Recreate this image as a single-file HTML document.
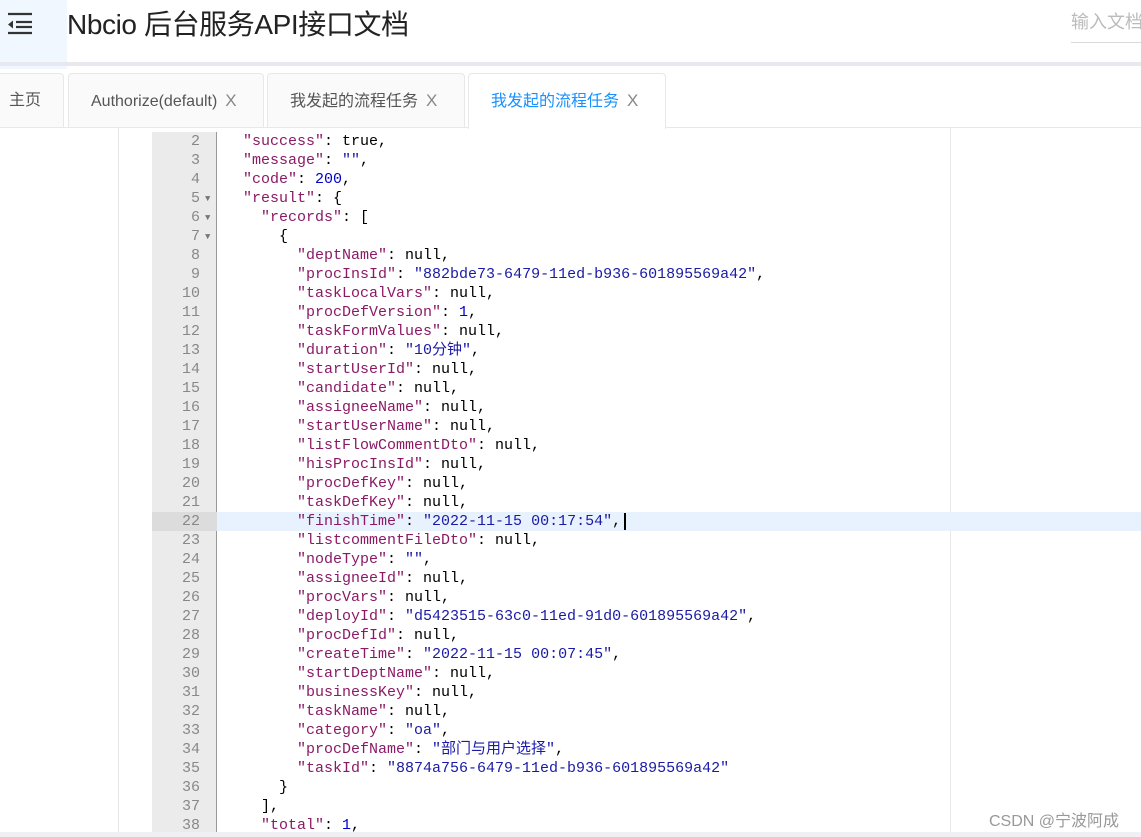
<!DOCTYPE html>
<html><head><meta charset="utf-8"><style>
*{margin:0;padding:0;box-sizing:border-box}
body{width:1141px;height:837px;overflow:hidden;background:#fff;font-family:"Liberation Sans","Noto Sans CJK SC",sans-serif;position:relative}
.hdr{position:absolute;left:0;top:0;width:1141px;height:62px;background:#fff}
.menu{position:absolute;left:0;top:0;width:67px;height:69px;background:#f0f7ff}
.title{position:absolute;left:67px;top:3px;font-size:28px;color:#222;letter-spacing:-0.4px}
.search{position:absolute;left:1071px;top:8px;font-size:18px;color:#bbb;white-space:nowrap}
.sline{position:absolute;left:1071px;top:42px;width:70px;height:1px;background:#d9d9d9}
.stripe{position:absolute;left:0;top:62px;width:1141px;height:4px;background:#e8e8ee}
.tab{position:absolute;top:73px;height:55px;background:#fafafa;border:1px solid #e8e8e8;border-bottom:none;border-radius:4px 4px 0 0;font-size:16px;color:#555;line-height:54px;padding-left:22px;white-space:nowrap}
.tab .x{color:#888;margin-left:8px;font-size:17px}
.tabline{position:absolute;left:0;top:127px;width:1141px;height:1px;background:#e8e8e8}
.lv{position:absolute;left:118px;top:128px;width:1px;height:709px;background:#e5e5e5}
.rv{position:absolute;left:950px;top:128px;width:1px;height:709px;background:#e8e8e8}
.gut{position:absolute;left:152px;top:132px;width:65px;height:705px;background:#ebebeb;border-right:1px solid #999}
.hl{position:absolute;left:217px;top:512px;width:924px;height:19px;background:#e8f2fe}
.hlg{position:absolute;left:152px;top:512px;width:65px;height:19px;background:#dcdcdc}
.code{position:absolute;left:0;top:132px;font-family:"Liberation Mono",monospace;font-size:15px;line-height:19px;white-space:pre}
.ln{position:absolute;left:152px;width:48px;text-align:right;color:#888}
.fd{position:absolute;left:205px;color:#777;font-size:9px}
.t{position:absolute;left:243px;color:#000}
.k{color:#8b1a66}.s{color:#1a1aa6}.n{color:#0000cd}
.foot{position:absolute;left:0;top:832px;width:1141px;height:5px;background:#f0f0f4}
.wm{position:absolute;left:989px;top:807px;font-size:16px;color:#999}
</style></head><body>
<div class="hdr"></div>
<div class="menu"><svg width="30" height="30" style="position:absolute;left:5px;top:8px" viewBox="0 0 30 30"><g stroke="#333" stroke-width="2.2"><line x1="3" y1="6" x2="27" y2="6"/><line x1="11" y1="14" x2="27" y2="14"/><line x1="11" y1="19" x2="27" y2="19"/><line x1="3" y1="25" x2="27" y2="25"/></g><path d="M3 12.5 L8 16.5 L3 20.5Z" fill="#333" transform="rotate(180 5.5 16.5)"/></svg></div>
<div class="title">Nbcio 后台服务API接口文档</div>
<div class="search">输入文档</div><div class="sline"></div>
<div class="stripe"></div>
<div class="tab" style="left:-14px;width:78px">主页</div>
<div class="tab" style="left:68px;width:196px">Authorize(default)<span class="x">X</span></div>
<div class="tab" style="left:267px;width:198px">我发起的流程任务<span class="x">X</span></div>
<div class="tabline"></div>
<div class="tab" style="left:468px;width:198px;background:#fff;color:#1890ff;height:56px">我发起的流程任务<span class="x">X</span></div>
<div class="lv"></div><div class="rv"></div>
<div class="gut"></div><div class="hlg"></div><div class="hl"></div>
<div class="code" id="c"></div>
<div style="position:absolute;left:624px;top:513px;width:1.5px;height:17px;background:#000"></div>
<div class="foot"></div>
<div class="wm">CSDN @宁波阿成</div>
<script>
var L=[
[1,'<span class="k">"success"</span>: true,'],
[1,'<span class="k">"message"</span>: <span class="s">""</span>,'],
[1,'<span class="k">"code"</span>: <span class="n">200</span>,'],
[1,'<span class="k">"result"</span>: {',1],
[2,'<span class="k">"records"</span>: [',1],
[3,'{',1],
[4,'<span class="k">"deptName"</span>: null,'],
[4,'<span class="k">"procInsId"</span>: <span class="s">"882bde73-6479-11ed-b936-601895569a42"</span>,'],
[4,'<span class="k">"taskLocalVars"</span>: null,'],
[4,'<span class="k">"procDefVersion"</span>: <span class="n">1</span>,'],
[4,'<span class="k">"taskFormValues"</span>: null,'],
[4,'<span class="k">"duration"</span>: <span class="s">"10分钟"</span>,'],
[4,'<span class="k">"startUserId"</span>: null,'],
[4,'<span class="k">"candidate"</span>: null,'],
[4,'<span class="k">"assigneeName"</span>: null,'],
[4,'<span class="k">"startUserName"</span>: null,'],
[4,'<span class="k">"listFlowCommentDto"</span>: null,'],
[4,'<span class="k">"hisProcInsId"</span>: null,'],
[4,'<span class="k">"procDefKey"</span>: null,'],
[4,'<span class="k">"taskDefKey"</span>: null,'],
[4,'<span class="k">"finishTime"</span>: <span class="s">"2022-11-15 00:17:54"</span>,'],
[4,'<span class="k">"listcommentFileDto"</span>: null,'],
[4,'<span class="k">"nodeType"</span>: <span class="s">""</span>,'],
[4,'<span class="k">"assigneeId"</span>: null,'],
[4,'<span class="k">"procVars"</span>: null,'],
[4,'<span class="k">"deployId"</span>: <span class="s">"d5423515-63c0-11ed-91d0-601895569a42"</span>,'],
[4,'<span class="k">"procDefId"</span>: null,'],
[4,'<span class="k">"createTime"</span>: <span class="s">"2022-11-15 00:07:45"</span>,'],
[4,'<span class="k">"startDeptName"</span>: null,'],
[4,'<span class="k">"businessKey"</span>: null,'],
[4,'<span class="k">"taskName"</span>: null,'],
[4,'<span class="k">"category"</span>: <span class="s">"oa"</span>,'],
[4,'<span class="k">"procDefName"</span>: <span class="s">"部门与用户选择"</span>,'],
[4,'<span class="k">"taskId"</span>: <span class="s">"8874a756-6479-11ed-b936-601895569a42"</span>'],
[3,'}'],
[2,'],'],
[2,'<span class="k">"total"</span>: <span class="n">1</span>,']];
var h='';
L.forEach(function(l,i){var y=i*19;
h+='<div class="ln" style="top:'+y+'px">'+(i+2)+'</div>';
if(l[2])h+='<div class="fd" style="top:'+(y+1)+'px">▼</div>';
h+='<div class="t" style="top:'+y+'px;left:'+(243+(l[0]-1)*18)+'px">'+l[1]+'</div>';});
document.getElementById('c').innerHTML=h;
</script>
</body></html>
